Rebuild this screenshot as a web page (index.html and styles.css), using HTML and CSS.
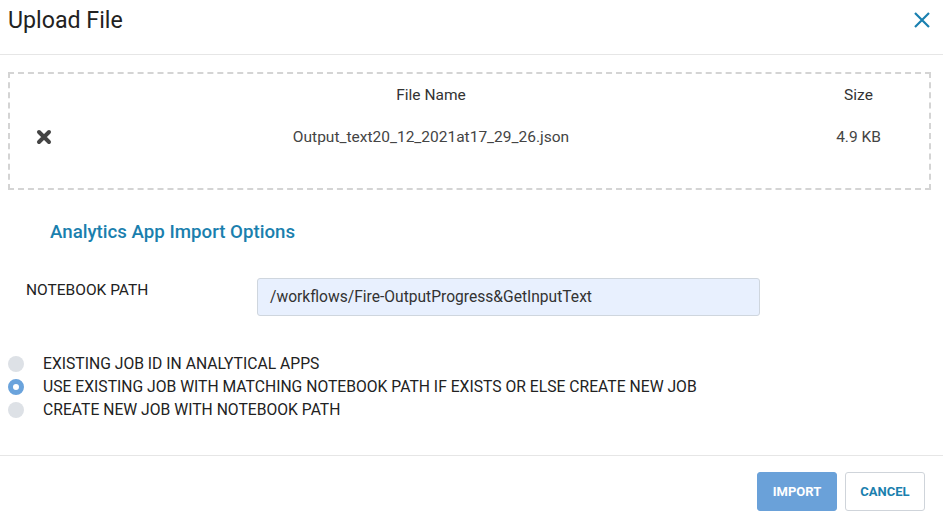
FILE: index.html
```html
<!DOCTYPE html>
<html>
<head>
<meta charset="utf-8">
<link rel="stylesheet" href="styles.css">
</head>
<body>
<div class="dialog">
  <div class="header">
    <div class="title">Upload File</div>
    <svg class="close" width="18" height="18" viewBox="0 0 18 18"><path d="M2 2 L16 16 M16 2 L2 16" stroke="#1a80b0" stroke-width="2.2" fill="none"/></svg>
  </div>
  <div class="body">
    <div class="files">
      <div class="frow head">
        <div class="c-del"></div>
        <div class="c-name">File Name</div>
        <div class="c-size">Size</div>
      </div>
      <div class="frow item">
        <div class="c-del"><svg width="16" height="16" viewBox="0 0 16 16"><path d="M3 3 L13 13 M13 3 L3 13" stroke="#444" stroke-width="4" stroke-linecap="round" fill="none"/></svg></div>
        <div class="c-name">Output_text20_12_2021at17_29_26.json</div>
        <div class="c-size">4.9 KB</div>
      </div>
    </div>
    <div class="section">Analytics App Import Options</div>
    <div class="field">
      <div class="label">NOTEBOOK PATH</div>
      <div class="input">/workflows/Fire-OutputProgress&amp;GetInputText</div>
    </div>
    <div class="radios">
      <div class="radio"><span class="dot"></span>EXISTING JOB ID IN ANALYTICAL APPS</div>
      <div class="radio"><span class="dot on"></span>USE EXISTING JOB WITH MATCHING NOTEBOOK PATH IF EXISTS OR ELSE CREATE NEW JOB</div>
      <div class="radio"><span class="dot"></span>CREATE NEW JOB WITH NOTEBOOK PATH</div>
    </div>
  </div>
  <div class="footer">
    <button class="btn primary">IMPORT</button>
    <button class="btn secondary">CANCEL</button>
  </div>
</div>
</body>
</html>
```
FILE: styles.css
```css
* { box-sizing: border-box; }
html, body { margin: 0; padding: 0; background: #fff; }
body { font-family: Roboto, "Liberation Sans", sans-serif; color: #333; width: 943px; height: 520px; overflow: hidden; }
.dialog { width: 943px; }
.header { height: 55px; border-bottom: 1px solid #e6e6e6; display: flex; align-items: flex-start; justify-content: space-between; padding: 5px 12px 0 8px; }
.title { font-size: 23.2px; line-height: 30px; color: #222; font-weight: 400; }
.close { margin-top: 6px; }
.body { padding: 17px 12px 0 8px; }
.files { border: 2px dashed #d4d4d4; height: 118px; padding-top: 10px; }
.frow { display: flex; align-items: center; font-size: 15.5px; color: #444; }
.frow.head { height: 22px; color: #333; }
.frow.item { height: 22px; margin-top: 20px; }
.c-del { width: 60px; padding-left: 26px; display: flex; align-items: center; }
.c-name { width: 722px; text-align: center; }
.c-size { flex: 1; text-align: center; padding-right: 4px; }
.section { color: #1a7fae; font-size: 18.7px; font-weight: 500; margin: 30px 0 0 42px; line-height: 24px; }
.field { display: flex; align-items: flex-start; margin-top: 34px; }
.label { width: 249px; padding-left: 18px; font-size: 15.5px; color: #222; line-height: 20px; padding-top: 2px; }
.input { width: 503px; height: 38px; background: #e8f0fe; border: 1px solid #cfd6de; border-radius: 3px; font-size: 15.6px; color: #333; padding: 0 12px; line-height: 36px; }
.radios { margin-top: 36px; }
.radio { display: flex; align-items: center; height: 23px; font-size: 15.7px; color: #222; }
.dot { width: 16px; height: 16px; border-radius: 50%; background: #dde1e6; margin-right: 19px; flex: none; }
.dot.on { background: #fff; border: 5px solid #6aa3dc; }
.footer { margin-top: 34px; border-top: 1px solid #e6e6e6; display: flex; justify-content: flex-end; gap: 8px; padding: 16px 18px 0 0; }
.btn { width: 80px; height: 39px; border-radius: 3px; font-family: Roboto, "Liberation Sans", sans-serif; font-size: 13px; font-weight: 700; cursor: pointer; }
.btn.primary { background: #6aa1d9; border: 1px solid #6aa1d9; color: #fff; }
.btn.secondary { background: #fff; border: 1px solid #cfd4da; color: #1a7fae; }
```
